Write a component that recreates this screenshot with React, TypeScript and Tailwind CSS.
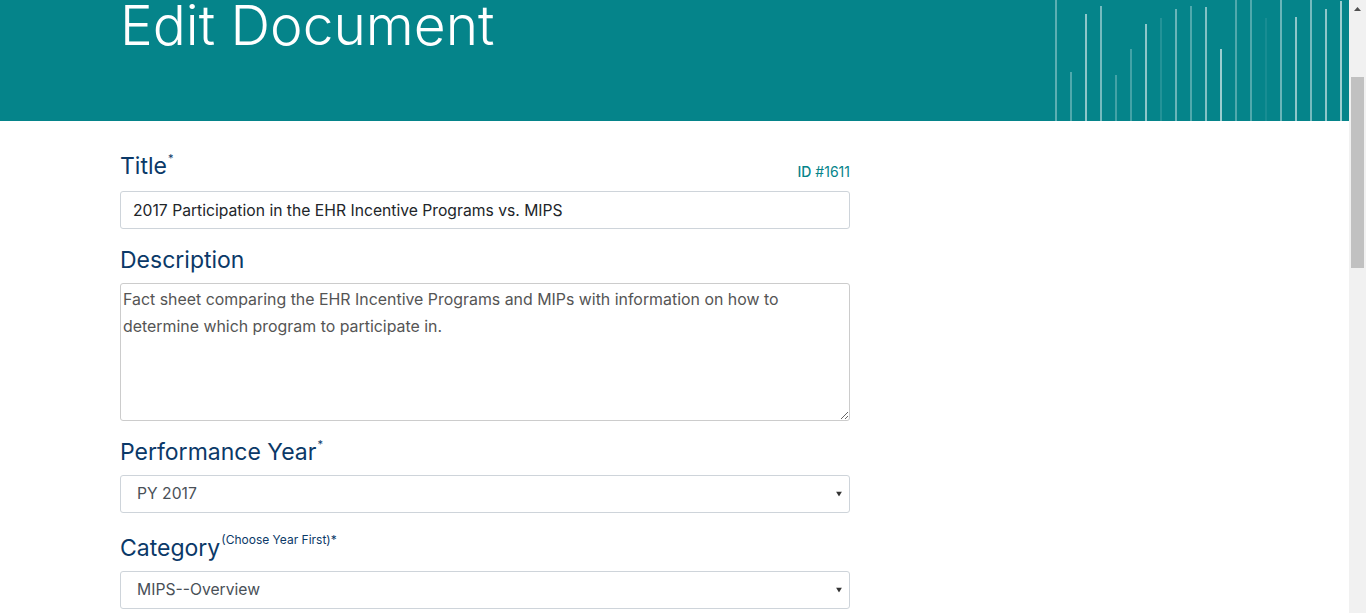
import React from 'react';

const BARS: { top: number; o: number }[] = [
  { top: 0, o: 0.35 },
  { top: 72, o: 0.3 },
  { top: 14, o: 0.55 },
  { top: 6, o: 0.45 },
  { top: 75, o: 0.25 },
  { top: 49, o: 0.25 },
  { top: 24, o: 0.55 },
  { top: 18, o: 0.12 },
  { top: 9, o: 0.4 },
  { top: 6, o: 0.3 },
  { top: 7, o: 0.5 },
  { top: 49, o: 0.6 },
  { top: 0, o: 0.3 },
  { top: 0, o: 0.3 },
  { top: 18, o: 0.08 },
  { top: 0, o: 0.4 },
  { top: 17, o: 0.55 },
  { top: 0, o: 0.45 },
  { top: 9, o: 0.55 },
  { top: 1, o: 0.6 },
];

const Caret = () => (
  <svg className="pointer-events-none absolute right-[8px] top-1/2 -translate-y-1/2" width="6" height="5" viewBox="0 0 6 5">
    <path d="M0 0h6L3 5z" fill="#333" />
  </svg>
);

const Label: React.FC<{ children: React.ReactNode; sup?: string; supSize?: string }> = ({ children, sup, supSize }) => (
  <label className="text-[23px] leading-[33px] text-[#0b3968]">
    {children}
    {sup && <sup className={`relative -top-[3px] ml-[1px] align-super leading-none ${supSize ?? 'text-[11px]'}`}>{sup}</sup>}
  </label>
);

export default function App() {
  return (
    <div className="flex h-[613px] overflow-hidden bg-white font-['Inter',sans-serif]">
      <div className="flex-1 min-w-0">
        <header className="relative h-[121px] bg-[#05848a] overflow-hidden">
          <h1 className="ml-[120px] -mt-[2px] text-[55px] leading-none font-light text-white">
            Edit Document
          </h1>
          <svg className="absolute left-[1055px] top-0" width="290" height="121" viewBox="0 0 290 121">
            {BARS.map((b, i) => (
              <rect key={i} x={i * 15} y={b.top} width="2" height={121 - b.top} fill="#ffffff" opacity={b.o} />
            ))}
          </svg>
        </header>

        <main className="ml-[120px] w-[730px] pt-[29px]">
          <div className="flex items-end justify-between">
            <Label sup="*">Title</Label>
            <span className="mb-[1px] text-[14px] text-[#06848a]">
              <span className="font-medium">ID</span> #1611
            </span>
          </div>
          <input
            className="mt-[8px] block h-[38px] w-full rounded-[3px] border border-[#ced4da] px-[12px] text-[15.7px] text-[#212529] outline-none"
            defaultValue="2017 Participation in the EHR Incentive Programs vs. MIPS"
          />

          <div className="mt-[15px]">
            <Label>Description</Label>
          </div>
          <textarea
            className="mt-[6px] block h-[138px] w-full rounded-[3px] border border-[#cccccc] px-[2px] py-[2px] text-[15.9px] leading-[27px] text-[#555555] outline-none"
            defaultValue="Fact sheet comparing the EHR Incentive Programs and MIPs with information on how to determine which program to participate in."
          />

          <div className="mt-[15px]">
            <Label sup="*">Performance Year</Label>
          </div>
          <div className="relative mt-[6px]">
            <select className="block h-[38px] w-full appearance-none rounded-[3px] border border-[#ced4da] bg-white px-[16px] text-[15.7px] text-[#495057] outline-none">
              <option>PY 2017</option>
            </select>
            <Caret />
          </div>

          <div className="mt-[19px]">
            <Label sup="(Choose Year First)*" supSize="text-[12px]">Category</Label>
          </div>
          <div className="relative mt-[6px]">
            <select className="block h-[38px] w-full appearance-none rounded-[3px] border border-[#ced4da] bg-white px-[16px] text-[15.7px] text-[#495057] outline-none">
              <option>MIPS--Overview</option>
            </select>
            <Caret />
          </div>
        </main>
      </div>

      <div className="flex w-[17px] shrink-0 flex-col bg-[#f1f1f1]">
        <div className="flex h-[17px] items-center justify-center">
          <svg width="7" height="4" viewBox="0 0 7 4">
            <path d="M0 4L3.5 0L7 4z" fill="#505050" />
          </svg>
        </div>
        <div className="mx-[2px] mt-[60px] h-[191px] bg-[#c1c1c1]" />
      </div>
    </div>
  );
}
